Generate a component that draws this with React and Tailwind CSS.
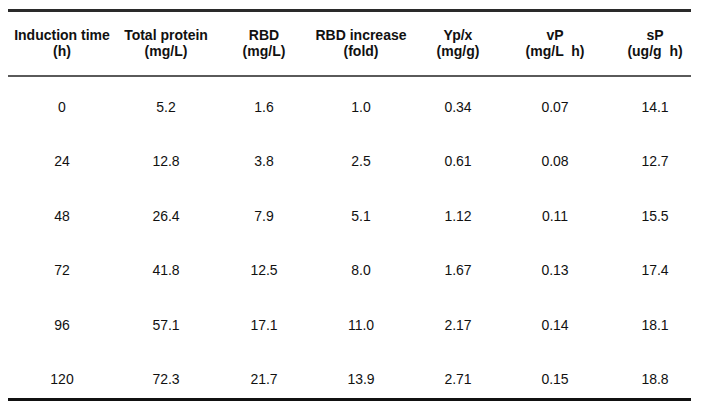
const COLS = [
  { top: "Induction time", sub: "(h)" },
  { top: "Total protein", sub: "(mg/L)" },
  { top: "RBD", sub: "(mg/L)" },
  { top: "RBD increase", sub: "(fold)" },
  { top: "Yp/x", sub: "(mg/g)" },
  { top: "vP", sub: "(mg/L  h)" },
  { top: "sP", sub: "(ug/g  h)" },
];

const ROWS = [
  ["0", "5.2", "1.6", "1.0", "0.34", "0.07", "14.1"],
  ["24", "12.8", "3.8", "2.5", "0.61", "0.08", "12.7"],
  ["48", "26.4", "7.9", "5.1", "1.12", "0.11", "15.5"],
  ["72", "41.8", "12.5", "8.0", "1.67", "0.13", "17.4"],
  ["96", "57.1", "17.1", "11.0", "2.17", "0.14", "18.1"],
  ["120", "72.3", "21.7", "13.9", "2.71", "0.15", "18.8"],
];

const GRID = "grid grid-cols-[108px_100px_96px_98px_96px_98px_87px]";

export default function App() {
  return (
    <div className="min-h-screen w-[701px] bg-white pt-[9px] font-['Liberation_Sans',Arial,sans-serif] text-[14px] text-[#111]">
      <div className="ml-[8px] w-[683px] border-t-[3px] border-b-[3px] border-t-[#2a2a2a] border-b-[#111]">
        {/* header */}
        <div className={`${GRID} h-[65px] border-b-2 border-[#5a5a5a]`}>
          {COLS.map((c, i) => (
            <div
              key={c.top}
              className={`flex flex-col items-center justify-center pb-[2px] font-bold leading-[16px] whitespace-pre ${i === 6 ? "pl-[15px]" : ""}`}
            >
              <span>{c.top}</span>
              <span>{c.sub}</span>
            </div>
          ))}
        </div>

        {/* body */}
        {ROWS.map((r) => (
          <div key={r[0]} className={`${GRID} h-[54.4px] pt-[22px] leading-[16px] last:h-[49px]`}>
            {r.map((v, i) => (
              <div key={i} className={`text-center ${i === 6 ? "pl-[15px]" : ""}`}>
                {v}
              </div>
            ))}
          </div>
        ))}
      </div>
    </div>
  );
}
